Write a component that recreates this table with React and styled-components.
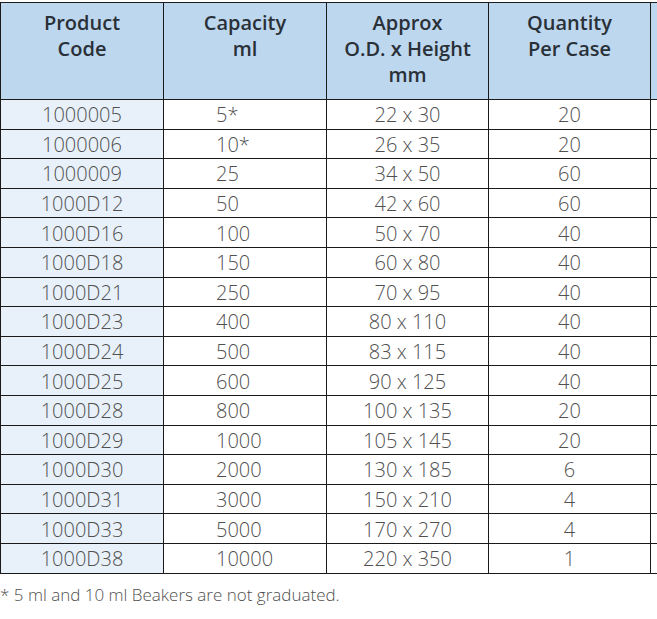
import styled, { createGlobalStyle } from 'styled-components';

const GlobalStyle = createGlobalStyle`
  html, body {
    margin: 0;
    padding: 0;
    background: #ffffff;
  }
`;

const rows = [
  ['1000005', '5*', '22 x 30', '20'],
  ['1000006', '10*', '26 x 35', '20'],
  ['1000009', '25', '34 x 50', '60'],
  ['1000D12', '50', '42 x 60', '60'],
  ['1000D16', '100', '50 x 70', '40'],
  ['1000D18', '150', '60 x 80', '40'],
  ['1000D21', '250', '70 x 95', '40'],
  ['1000D23', '400', '80 x 110', '40'],
  ['1000D24', '500', '83 x 115', '40'],
  ['1000D25', '600', '90 x 125', '40'],
  ['1000D28', '800', '100 x 135', '20'],
  ['1000D29', '1000', '105 x 145', '20'],
  ['1000D30', '2000', '130 x 185', '6'],
  ['1000D31', '3000', '150 x 210', '4'],
  ['1000D33', '5000', '170 x 270', '4'],
  ['1000D38', '10000', '220 x 350', '1'],
];

export default function App() {
  return (
    <Page>
      <GlobalStyle />
      <TableWrap>
        <Table>
          <colgroup>
            <col style={{ width: 163 }} />
            <col style={{ width: 163 }} />
            <col style={{ width: 162 }} />
            <col style={{ width: 162 }} />
            <col style={{ width: 100 }} />
          </colgroup>
          <thead>
            <tr>
              <HeadCell>Product<br />Code</HeadCell>
              <HeadCell>Capacity<br />ml</HeadCell>
              <HeadCell>Approx<br />O.D. x Height<br />mm</HeadCell>
              <HeadCell>Quantity<br />Per Case</HeadCell>
              <HeadCell />
            </tr>
          </thead>
          <tbody>
            {rows.map(([code, cap, size, qty]) => (
              <Row key={code}>
                <Cell $shaded>{code}</Cell>
                <Cell $align="left">{cap}</Cell>
                <Cell>{size}</Cell>
                <Cell>{qty}</Cell>
                <Cell />
              </Row>
            ))}
          </tbody>
        </Table>
      </TableWrap>
      <Note>* 5 ml and 10 ml Beakers are not graduated.</Note>
    </Page>
  );
}

const Page = styled.div`
  width: 657px;
  height: 619px;
  overflow: hidden;
  padding-top: 2px;
  box-sizing: border-box;
  font-family: 'Open Sans', 'Noto Sans', sans-serif;
`;

const TableWrap = styled.div`
  width: 657px;
  overflow: hidden;
`;

const Table = styled.table`
  border-collapse: collapse;
  table-layout: fixed;
  width: 750px;
`;

const HeadCell = styled.th`
  background: #bdd7ee;
  border: 1px solid #1a1a1a;
  height: 97px;
  padding: 7px 4px 0;
  box-sizing: border-box;
  vertical-align: top;
  text-align: center;
  font-size: 20px;
  line-height: 26px;
  font-weight: 600;
  color: #2a3038;
`;

const Row = styled.tr`
  height: 29.6px;
`;

const Cell = styled.td`
  background: ${({ $shaded }) => ($shaded ? '#e8f0fa' : '#ffffff')};
  border: 1px solid #1a1a1a;
  padding: ${({ $align }) => ($align === 'left' ? '2px 0 0 52px' : '2px 0 0')};
  text-align: ${({ $align }) => $align || 'center'};
  vertical-align: middle;
  font-size: 20px;
  line-height: 26px;
  font-weight: 300;
  color: #505050;
  white-space: nowrap;
`;

const Note = styled.p`
  margin: 11px 0 0 0;
  font-size: 17px;
  line-height: 20px;
  font-weight: 300;
  color: #505050;
`;
